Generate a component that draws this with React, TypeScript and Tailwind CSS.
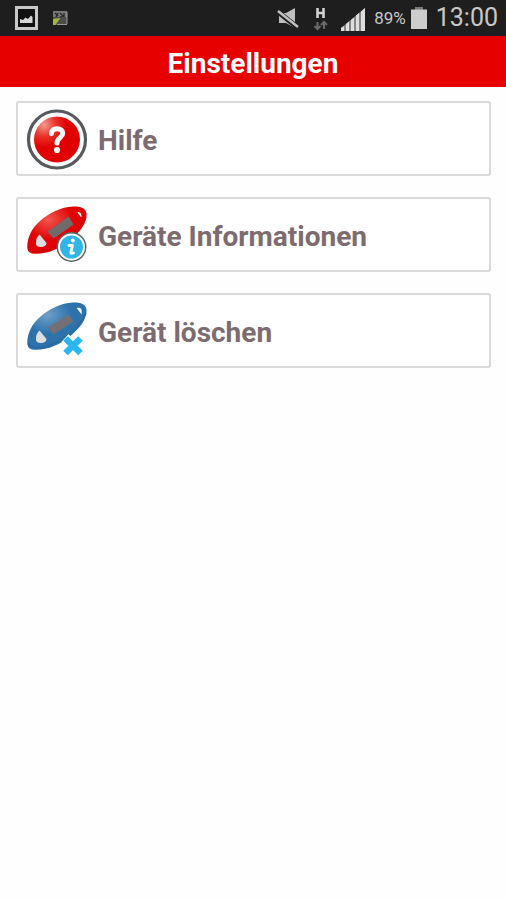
import { ReactNode } from "react";

const POD_SHAPE =
  "M1.300 42C1.500 33 6 24 14 17C23 9 35 3 47 2.500C52 2.200 58 3 60 7.500C62 13 58.500 21 53.500 27C46 35.500 38 42 28 46C21 49.200 12 50.500 6 49.500C2.500 48.500 1.200 46 1.300 42Z";

function HelpIcon() {
  return (
    <svg viewBox="0 0 62 62" className="size-[62px] shrink-0" aria-hidden="true">
      <defs>
        <radialGradient id="helpShine" cx="0.22" cy="0.18" r="0.5">
          <stop offset="0" stopColor="#f59a90" />
          <stop offset="0.5" stopColor="#e8342c" />
          <stop offset="1" stopColor="#e10000" />
        </radialGradient>
      </defs>
      <circle cx="31" cy="31.500" r="28.500" fill="#fff" stroke="#565a5c" strokeWidth="3.200" />
      <circle cx="31" cy="31.500" r="23" fill="url(#helpShine)" />
      <path
        d="M25.500 25.500C25.800 22.200 28 20.800 31 20.800C34.500 20.800 36.800 22.500 36.800 25.300C36.800 29.500 31 30 31 35"
        fill="none"
        stroke="#fff"
        strokeWidth="5"
        strokeLinecap="round"
      />
      <circle cx="31" cy="42" r="3.100" fill="#fff" />
    </svg>
  );
}

function DeviceInfoIcon() {
  return (
    <svg viewBox="0 0 62 62" className="size-[62px] shrink-0" aria-hidden="true">
      <defs>
        <radialGradient id="redPod" cx="0.36" cy="0.28" r="0.4">
          <stop offset="0" stopColor="#f0564c" />
          <stop offset="1" stopColor="#e00608" />
        </radialGradient>
      </defs>
      <path d={POD_SHAPE} fill="url(#redPod)" />
      <path d="M2 43C4 48 12 49 22 46C39 40 54 27 60 13" fill="none" stroke="#b8080a" strokeWidth="1.500" opacity="0.5" />
      <path d="M21.500 27.500L42.500 12.500L47.500 20.500L27.500 34.500Z" fill="#706a6b" />
      <path d="M13.500 30.500L20.500 39Q20 42.500 16 43Q10.500 43.500 10 40Q9.500 34 13.500 30.500Z" fill="#dedee2" />
      <path d="M52 8.500Q55.500 8.500 55 12.500Z" fill="#fff" stroke="#fff" />
      <circle cx="45.500" cy="43" r="15" fill="#5b6063" />
      <circle cx="45.500" cy="43" r="13.500" fill="#fff" />
      <circle cx="45.500" cy="43" r="11.500" fill="#30b5e8" />
      <circle cx="46.800" cy="36.500" r="2" fill="#fff" />
      <path
        d="M43 41.500H46.500L44.800 48.500Q44.600 50 47.500 49"
        fill="none"
        stroke="#fff"
        strokeWidth="2.800"
        strokeLinecap="round"
        strokeLinejoin="round"
      />
    </svg>
  );
}

function DeviceDeleteIcon() {
  return (
    <svg viewBox="0 0 62 62" className="size-[62px] shrink-0" aria-hidden="true">
      <defs>
        <radialGradient id="bluePod" cx="0.34" cy="0.26" r="0.4">
          <stop offset="0" stopColor="#6f9fc8" />
          <stop offset="1" stopColor="#2d72ab" />
        </radialGradient>
      </defs>
      <path d={POD_SHAPE} fill="url(#bluePod)" />
      <path d="M2 43C4 48 12 49 22 46C39 40 54 27 60 13" fill="none" stroke="#215f96" strokeWidth="1.500" opacity="0.5" />
      <path d="M22 27.500L43 14.500L47.500 21.500L27.500 34.500Z" fill="#736f75" />
      <path d="M13.500 30.500L20.500 39Q20 42.500 16 43Q10.500 43.500 10 40Q9.500 34 13.500 30.500Z" fill="#dedee2" />
      <path d="M52 8.500Q55.500 8 55 12.500Z" fill="#9cc0e0" stroke="#e8f2fa" strokeWidth="1.500" />
      <path d="M39 38L55 53M55 38L39 53" stroke="#fff" strokeWidth="10" />
      <path d="M39.500 38.500L54.500 53M54.500 38.500L39.500 53" stroke="#29b6f2" strokeWidth="6.500" />
    </svg>
  );
}

function StatusBar() {
  return (
    <div className="flex h-9 items-center bg-[#1e1e1e] pr-2 pl-[15px] text-[#c8c8c8]">
      <svg viewBox="0 0 23 26" className="h-[26px] w-[23px]" aria-hidden="true">
        <path d="M1.500 2.500H21.500V23.500H1.500Z" fill="#111" stroke="#c9c9c9" strokeWidth="3" />
        <path d="M5 18V14L8 15L10.500 12.500L13 14L16 10.500L17.500 12V18Z" fill="#d6d6d6" />
      </svg>
      <svg viewBox="0 0 16 16" className="ml-[14px] size-4" aria-hidden="true">
        <path d="M1 1H15V15H1Z" fill="#4c4c4c" />
        <path d="M1 1H15V7H1Z" fill="#777" />
        <path d="M3 3L6 6M6 3L4 7M8 3L11 6L8 7M12 3V7" stroke="#262626" strokeWidth="1.300" fill="none" />
        <path d="M1 9L8 8L3 15H1Z" fill="#a4bd25" />
        <path d="M8 8L3 15M5 14.500H15M15 2V14" stroke="#999" fill="none" />
      </svg>

      <div className="ml-auto flex items-center">
        <svg viewBox="0 0 24 22" className="h-[22px] w-6" aria-hidden="true">
          <path d="M2 6H9L18 1V21L9 16H2Z" fill="#bebebe" />
          <path d="M0 4L20 20" stroke="#1e1e1e" strokeWidth="5" />
          <path d="M1 4L21 20" stroke="#bebebe" strokeWidth="2.600" />
        </svg>
        <svg viewBox="0 0 16 26" className="ml-3 h-[26px] w-4" aria-hidden="true">
          <path d="M4.500 3V13M10.500 3V13M4 8H11" stroke="#d2d2d2" strokeWidth="2.600" fill="none" />
          <path d="M4.500 17V24M1.500 21L4.500 24L7.500 21M11 24V17M8 20L11 17L14 20" stroke="#6b6b6b" strokeWidth="2" fill="none" />
        </svg>
        <svg viewBox="0 0 26 26" className="ml-[11px] h-[26px] w-[26px]" aria-hidden="true">
          <path d="M1 26V23L25 3V26Z" fill="#858585" />
          <path d="M1 26V23L4 21V26ZM6 26V19L9 16.500V26ZM11 26V15L14 12.500V26ZM16 26V10.500L19 8V26ZM21 26V6.500L25 3V26Z" fill="#dedede" />
        </svg>
        <span className="ml-2 font-[Roboto,sans-serif] text-[17px] leading-9">89%</span>
        <svg viewBox="0 0 18 24" className="ml-1 h-6 w-[18px]" aria-hidden="true">
          <path d="M5 1H13V4H5Z" fill="#777" />
          <path d="M1 3.500H17V23H1Z" fill="#cdcdcd" />
        </svg>
        <span className="ml-2 font-[Roboto,sans-serif] text-[25px] leading-9">13:00</span>
      </div>
    </div>
  );
}

function MenuItem({ icon, label }: { icon: ReactNode; label: string }) {
  return (
    <button
      type="button"
      className="flex h-[75px] w-full items-center gap-[10px] rounded-[3px] border-2 border-[#dadada] bg-white px-2 text-left text-[28px] leading-8 font-bold text-[#7c6c70]"
    >
      {icon}
      <span className="pt-1">{label}</span>
    </button>
  );
}

export default function App() {
  return (
    <div className="min-h-screen bg-[#fefefe] font-[Roboto,sans-serif]">
      <StatusBar />

      <header className="flex h-[51px] items-center justify-center bg-[#e60000]">
        <h1 className="pt-1 text-[28px] leading-8 font-bold text-white">Einstellungen</h1>
      </header>

      <main className="flex flex-col gap-[21px] py-[14px] pr-[15px] pl-4">
        <MenuItem icon={<HelpIcon />} label="Hilfe" />
        <MenuItem icon={<DeviceInfoIcon />} label="Geräte Informationen" />
        <MenuItem icon={<DeviceDeleteIcon />} label="Gerät löschen" />
      </main>
    </div>
  );
}
